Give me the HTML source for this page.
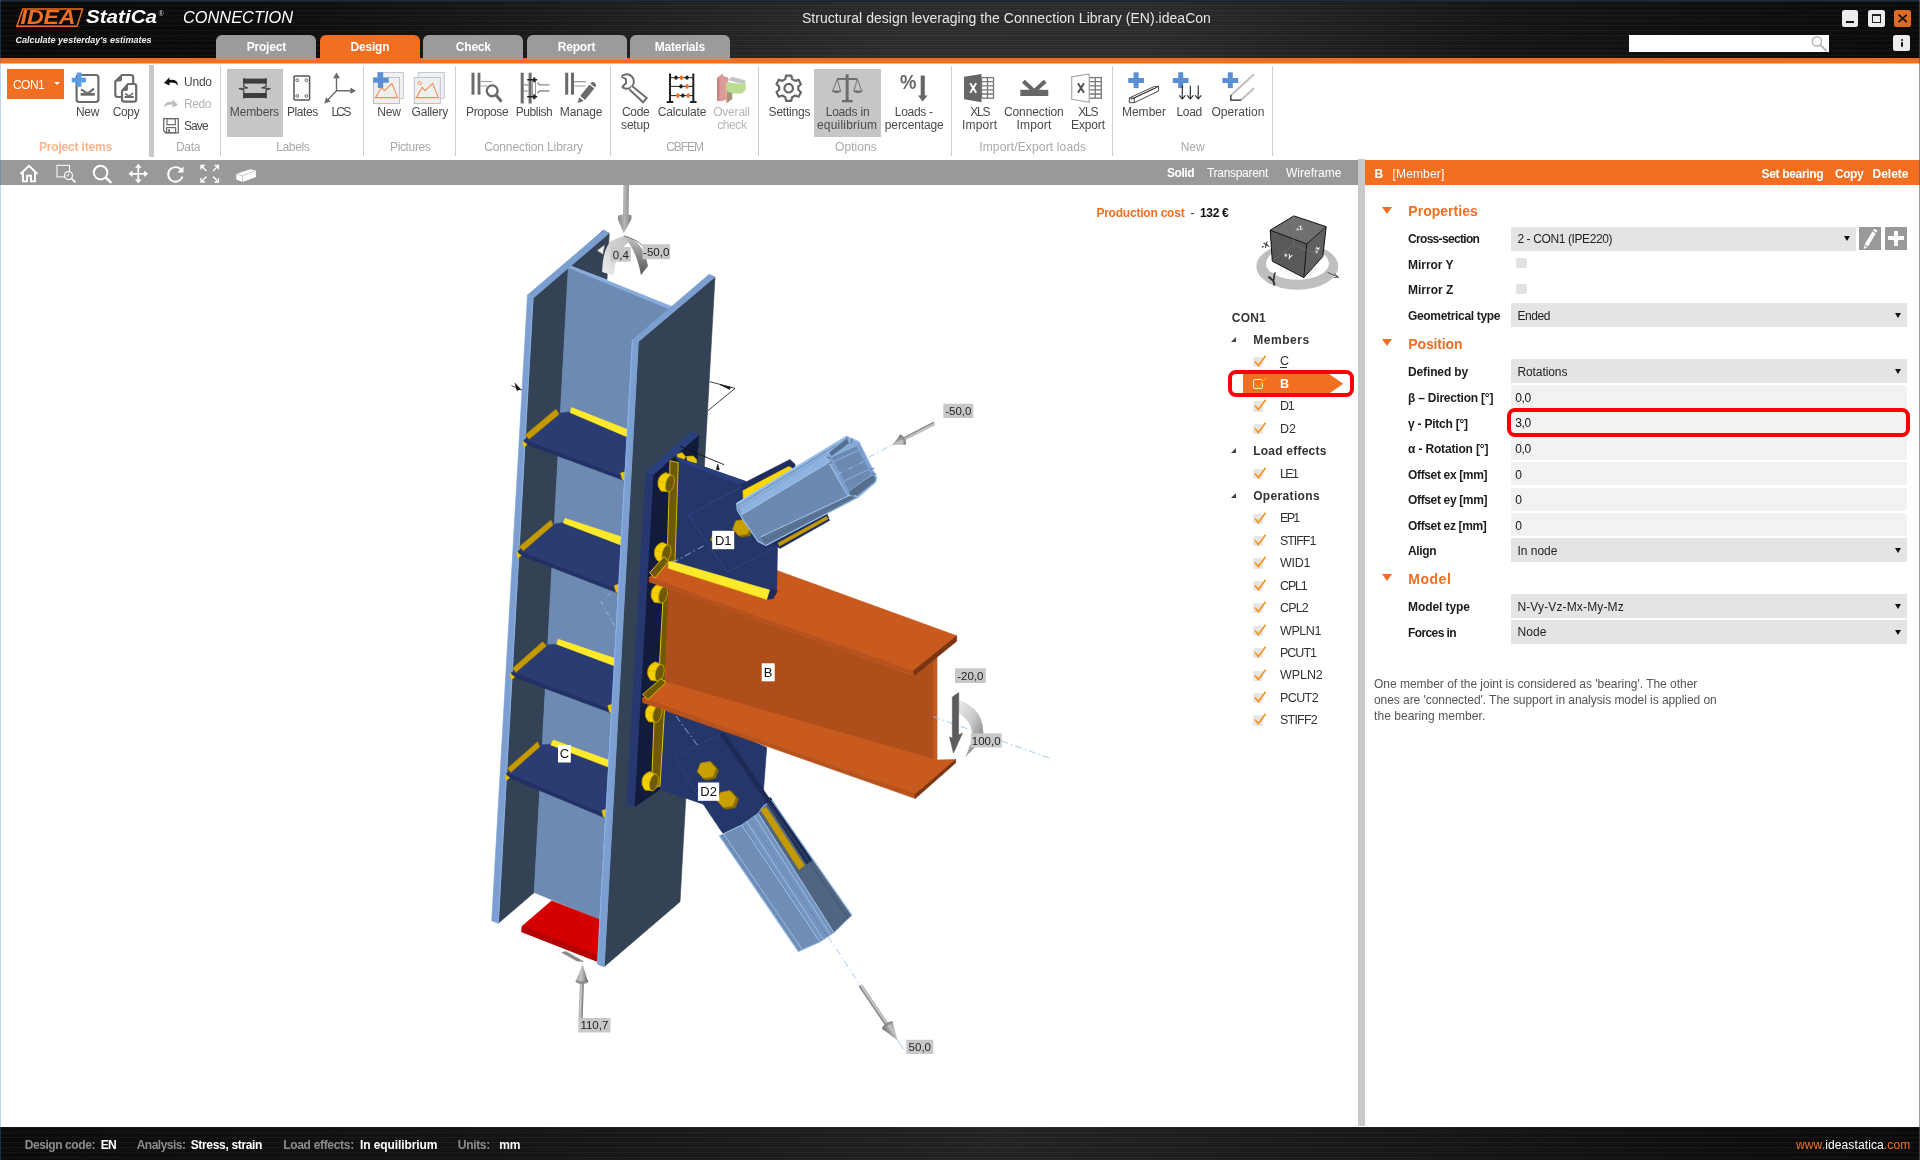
<!DOCTYPE html>
<html lang="en">
<head>
<meta charset="utf-8">
<title>IDEA StatiCa Connection</title>
<style>
*{box-sizing:border-box;margin:0;padding:0}
html,body{width:1920px;height:1160px;overflow:hidden;background:#fff}
body{font-family:"Liberation Sans",sans-serif;font-size:12px;color:#222;position:relative}
.abs{position:absolute}
.t{position:absolute;white-space:nowrap;line-height:1}
#titlebar{left:0;top:0;width:1920px;height:58px;
 background:
  repeating-linear-gradient(180deg,rgba(255,255,255,.035) 0 1px,rgba(0,0,0,.12) 1px 2px,rgba(255,255,255,0) 2px 3px,rgba(0,0,0,.1) 3px 5px),
  linear-gradient(90deg,#0a0a0a 0,#0d0d0d 250px,#202020 600px,#313131 900px,#303030 1150px,#171717 1500px,#0b0b0b 1920px);}
#orangeline{left:0;top:58px;width:1920px;height:6px;background:linear-gradient(180deg,#f26f21 0 5px,#f9b48a 5px 6px)}
.tab{position:absolute;top:34.5px;height:25px;width:100px;border-radius:6px 6px 0 0;background:#9b9b9b;color:#fff;font-weight:bold;font-size:12px;letter-spacing:-0.2px;text-align:center;line-height:25px}
.tab.on{background:#f26f21}
#ribbon{left:0;top:64px;width:1920px;height:95px;background:#fff}
.sep{position:absolute;top:66px;width:1px;height:90px;background:#cfcfcf}
.gl{position:absolute;top:141px;color:#a9a9a9;font-size:12px;line-height:14px;white-space:nowrap;transform:translateX(-50%)}
.bl{position:absolute;color:#4a4a4a;font-size:12px;margin-top:1px;line-height:13px;text-align:center;white-space:nowrap;transform:translateX(-50%)}
.bl.dis{color:#b5b5b5}
.hl{position:absolute;background:#c6c6c6}
#viewbar{left:0;top:159.6px;width:1358px;height:25.2px;background:#999}
#splitter{left:1358px;top:159px;width:7px;height:967px;background:#c9c9c9}
#main{left:0;top:185px;width:1358px;height:941px;background:#fff}
#panelhead{left:1365px;top:160px;width:555px;height:25px;background:#f26f21}
#status{left:0;top:1126.5px;width:1920px;height:33.5px;
 background:
  repeating-linear-gradient(180deg,rgba(255,255,255,.035) 0 1px,rgba(0,0,0,.12) 1px 2px,rgba(255,255,255,0) 2px 3px,rgba(0,0,0,.1) 3px 5px),
  linear-gradient(90deg,#0c0c0c 0,#161616 500px,#262626 1000px,#161616 1500px,#0b0b0b 1920px);}
</style>
</head>
<body>
<div id="app" style="position:absolute;left:0;top:0;width:1920px;height:1160px;will-change:transform">
<div id="titlebar" class="abs"></div>
<div id="orangeline" class="abs"></div>
<div class="tab" style="left:216.3px">Project</div>
<div class="tab on" style="left:319.9px">Design</div>
<div class="tab" style="left:423.3px">Check</div>
<div class="tab" style="left:526.5px">Report</div>
<div class="tab" style="left:629.8px">Materials</div>
<div id="ribbon" class="abs"></div>
<div id="viewbar" class="abs"></div>
<div id="main" class="abs"></div>
<div id="splitter" class="abs"></div>
<div id="panelhead" class="abs"></div>
<div id="status" class="abs"></div>
<!-- ribbon: project items -->
<div class="abs" style="left:6.5px;top:69px;width:57.5px;height:30px;background:#f26f21"></div>
<div class="t" style="left:13px;top:78.5px;font-size:12px;color:#fff;letter-spacing:-0.55px">CON1</div>
<div class="abs" style="left:54px;top:82px;width:0;height:0;border-left:3px solid transparent;border-right:3px solid transparent;border-top:3px solid #fff"></div>
<div class="abs" style="left:149px;top:65px;width:4.8px;height:92px;background:#c8c8c8"></div>
<!-- data -->
<div class="sep" style="left:220px"></div>
<!-- labels -->
<div class="hl" style="left:227px;top:69px;width:56px;height:68px"></div>
<div class="sep" style="left:363px"></div>
<!-- pictures -->
<div class="sep" style="left:455px"></div>
<!-- connection library -->
<div class="sep" style="left:610px"></div>
<!-- cbfem -->
<div class="sep" style="left:758px"></div>
<!-- options -->
<div class="hl" style="left:814px;top:69px;width:67px;height:68px"></div>
<div class="sep" style="left:951px"></div>
<!-- import/export -->
<div class="sep" style="left:1112px"></div>
<!-- new -->
<div class="sep" style="left:1272px"></div>
<svg class="abs" style="left:0;top:0" width="1920" height="190" viewBox="0 0 1920 190" fill="none" stroke-linecap="butt">
<!-- New (project) -->
<rect x="76.6" y="75" width="21.8" height="27" rx="2.5" stroke="#6b6b6b" stroke-width="2.2"/>
<path d="M81 89.3 L87.6 93.6 L94 88.6" stroke="#6b6b6b" stroke-width="2.2"/>
<rect x="80.6" y="93" width="14.2" height="2.7" fill="#6b6b6b"/>
<rect x="71.7" y="77.7" width="14.3" height="4.7" fill="#5d9ce6"/><rect x="76.8" y="72.5" width="4.7" height="14.3" fill="#5d9ce6"/>
<!-- Copy (project) -->
<path d="M121 97 H117.5 Q115.3 97 115.3 94.8 V81.5 L122 75 H131 Q133.2 75 133.2 77.2 V83" stroke="#6b6b6b" stroke-width="2.2"/>
<path d="M115.3 81.5 L122 75 V79.5 Q122 81.5 120 81.5 Z" fill="#6b6b6b"/>
<path d="M122 91 L128 84 H134 Q136.2 84 136.2 86.2 V99.5 Q136.2 101.7 134 101.7 H124.2 Q122 101.7 122 99.5 Z" stroke="#6b6b6b" stroke-width="2.2" fill="#fff"/>
<path d="M122 91 L128 84 V89 Q128 91 126 91 Z" fill="#6b6b6b"/>
<path d="M125.2 93.5 L129.2 96.3 L133.2 93" stroke="#6b6b6b" stroke-width="1.6"/>
<rect x="124.6" y="96" width="9.2" height="2" fill="#6b6b6b"/>
<!-- Undo -->
<path d="M164 83 L169.5 77.3 V80 Q177.5 78.5 178 85.5 Q175 81.8 169.5 82.8 V85.6 Z" fill="#111"/>
<path d="M178 105 L172.5 99.3 V102 Q164.5 100.5 164 107.5 Q167 103.8 172.5 104.8 V107.6 Z" fill="#bdbdbd"/>
<!-- Save -->
<path d="M163.7 118.7 H178.3 V132.8 H165.7 L163.7 130.8 Z" stroke="#6b6b6b" stroke-width="1.3"/>
<rect x="167" y="118.7" width="8.3" height="6" stroke="#6b6b6b" stroke-width="1.2"/>
<rect x="166.6" y="127.6" width="9" height="5.2" stroke="#6b6b6b" stroke-width="1.2"/>
<rect x="168.2" y="129.2" width="1.8" height="3" fill="#6b6b6b"/>
<!-- Members -->
<rect x="243.2" y="78.6" width="23.4" height="5" fill="#3c3c3c"/><rect x="243.2" y="93" width="23.4" height="5" fill="#3c3c3c"/>
<path d="M243.8 78 V86.5 L248 88 L239 88.5 L243.8 90 V98.5 M266 78 V86.5 L261.5 88 L270.5 88.5 L266 90 V98.5" stroke="#3c3c3c" stroke-width="1.2"/>
<!-- Plates -->
<rect x="294" y="76" width="15.6" height="24" rx="1" stroke="#555" stroke-width="1.5"/>
<circle cx="297.3" cy="80.2" r="1.4" stroke="#555" stroke-width="0.9"/><circle cx="306.4" cy="80.2" r="1.4" stroke="#555" stroke-width="0.9"/>
<circle cx="297.3" cy="96" r="1.4" stroke="#555" stroke-width="0.9"/><circle cx="306.4" cy="96" r="1.4" stroke="#555" stroke-width="0.9"/>
<!-- LCS -->
<path d="M336.5 76 V90.8 H352 M336.5 90.8 L327 100.8" stroke="#6b6b6b" stroke-width="1.4"/>
<path d="M336.5 72.6 L333 78.3 H340 Z M356 90.8 L350.4 87.5 V94.1 Z M324.3 103.6 L326 97.3 L330.6 101.6 Z" fill="#6b6b6b"/>
<!-- Pictures New -->
<g id="pic"><rect x="377.5" y="72.5" width="26" height="26" fill="#f1f1f1" stroke="#c3c8da" stroke-width="1"/>
<rect x="373.5" y="77.5" width="26" height="26" fill="#efefef" stroke="#b9c0d6" stroke-width="1"/>
<path d="M375.5 97.6 L381.5 87.3 L384.4 90.6 L391.9 83.5 L397.6 97.6 Z" stroke="#f0905a" stroke-width="1.1"/></g>
<rect x="373.2" y="77.7" width="15.6" height="5" fill="#5b8fd3"/><rect x="377.8" y="72.3" width="5.4" height="15.6" fill="#5b8fd3"/>
<g transform="translate(40.8 0)"><g><rect x="377.5" y="72.5" width="26" height="26" fill="#f1f1f1" stroke="#c3c8da" stroke-width="1"/>
<rect x="373.5" y="77.5" width="26" height="26" fill="#efefef" stroke="#b9c0d6" stroke-width="1"/>
<path d="M375.5 97.6 L381.5 87.3 L384.4 90.6 L391.9 83.5 L397.6 97.6 Z" stroke="#f0905a" stroke-width="1.1"/></g></g>
<circle cx="419.7" cy="83.1" r="1.7" stroke="#f0905a" stroke-width="0.9"/>
<!-- Propose -->
<rect x="471.5" y="72.7" width="3" height="22" fill="#6b6b6b"/><rect x="477.6" y="72.7" width="2.8" height="22" fill="#6b6b6b"/>
<path d="M480.4 81.5 H492 M480.4 86 H487" stroke="#9a9a9a" stroke-width="1.2"/>
<circle cx="492.2" cy="90.8" r="5.4" stroke="#6b6b6b" stroke-width="2.4" fill="#fff"/>
<path d="M496.3 95.3 L501.5 101.7" stroke="#6b6b6b" stroke-width="3"/>
<!-- Publish -->
<rect x="520.7" y="72.7" width="3" height="30.8" fill="#6b6b6b"/><rect x="528.6" y="72.7" width="3" height="30.8" fill="#6b6b6b"/>
<rect x="532.6" y="79.5" width="3" height="17.5" stroke="#8a8a8a" stroke-width="0.9"/>
<path d="M527.2 79.8 H537.2 M527.2 96.8 H537.2" stroke="#222" stroke-width="1.6"/>
<path d="M534.3 77.4 V82.2 M534.3 94.4 V99.2" stroke="#222" stroke-width="2.2"/>
<path d="M523.7 84.8 H528.6 M523.7 91 H528.6" stroke="#8a8a8a" stroke-width="1.2"/>
<path d="M537.5 82.5 L539.5 84.8 H549.4 M537.5 93.3 L539.5 91 H549.4" stroke="#8a8a8a" stroke-width="1.3"/>
<!-- Manage -->
<rect x="565.2" y="72.7" width="3" height="22" fill="#6b6b6b"/><rect x="571" y="72.7" width="3" height="22" fill="#6b6b6b"/>
<path d="M574 81.7 H585.7 M574 86 H585.7" stroke="#9a9a9a" stroke-width="1.2"/>
<path d="M580.2 96 L589.5 84.5 L594.3 88.4 L585 99.9 Z" fill="#6b6b6b"/>
<path d="M590.4 83.4 L591.2 82.6 Q593.3 81.2 595 82.9 Q596.8 84.8 595.6 86.5 L595 87.4 Z" fill="#6b6b6b"/>
<path d="M579.2 97.3 L583.7 101 L577.7 103 Z" fill="#6b6b6b"/>
<!-- Code setup wrench -->
<path d="M621.5 76.5 A7.2 7.2 0 1 1 622 87 M621.5 76.5 L626 79.3 V83.3 L622 87" stroke="#6b6b6b" stroke-width="1.9"/>
<path d="M632 86 L646.8 98 L643 102.3 L629.5 89.5" stroke="#6b6b6b" stroke-width="1.9" fill="#fff"/>
<!-- Calculate abacus -->
<path d="M670 73.5 V101.5 M693.3 73.5 V101.5" stroke="#222" stroke-width="2"/>
<path d="M666.8 102 H673.2 M690.1 102 H696.5" stroke="#222" stroke-width="2.2"/>
<path d="M670 77.7 H693.3 M670 86.4 H693.3 M670 95.6 H693.3" stroke="#222" stroke-width="1"/>
<g fill="#222"><ellipse cx="676" cy="77.7" rx="1.7" ry="2.1"/><ellipse cx="687" cy="77.7" rx="1.7" ry="2.1"/><ellipse cx="681" cy="86.4" rx="1.7" ry="2.1"/><ellipse cx="682.8" cy="95.6" rx="1.7" ry="2.1"/></g>
<g fill="#ee7423"><ellipse cx="681.5" cy="77.7" rx="1.7" ry="2.3"/><ellipse cx="687" cy="86.4" rx="1.7" ry="2.3"/><ellipse cx="677.8" cy="95.6" rx="1.7" ry="2.3"/><ellipse cx="688.2" cy="95.6" rx="1.7" ry="2.3"/></g>
<!-- Overall check (disabled) -->
<path d="M717 77.5 L723 73.5 V76 L728 77.5 V99.5 L722 101 H717 Z" fill="#dc9a9a"/>
<path d="M717 77.5 L719.5 78.5 V100.5 L717 101 Z" fill="#c98585"/>
<path d="M726.3 90 L732.3 91 V99 L726.3 103.5 Z" fill="#a9917b"/>
<path d="M726.3 82 L742 84 L745.7 80.8 V90 L742 93.6 H732 L726.3 91 Z" fill="#b9dc92"/>
<path d="M727.3 80 L732.2 76.8 L745.7 80.4 L742.2 84 Z" fill="#c4c4c4"/>
<path d="M726.3 82 V103.3" stroke="#f3c089" stroke-width="0.8"/>
<!-- Settings gear -->
<g transform="translate(788.7 88.2)" stroke="#666" stroke-width="2.2" stroke-linejoin="round">
<path id="gear" d="M-2.6 -12.6 H2.6 L3.4 -9.1 L6.5 -7.3 L9.9 -8.5 L12.2 -4 L9.6 -1.6 V1.6 L12.2 4 L9.9 8.5 L6.5 7.3 L3.4 9.1 L2.6 12.6 H-2.6 L-3.4 9.1 L-6.5 7.3 L-9.9 8.5 L-12.2 4 L-9.6 1.6 V-1.6 L-12.2 -4 L-9.9 -8.5 L-6.5 -7.3 L-3.4 -9.1 Z"/>
<circle r="4.3"/></g>
<!-- Loads in equilibrium -->
<rect x="845.7" y="74.3" width="2.9" height="26.5" fill="#6b6b6b"/><rect x="842" y="100" width="10.7" height="2.3" fill="#6b6b6b"/><rect x="837.3" y="78" width="20" height="1.9" fill="#6b6b6b"/>
<path d="M837.3 79 L832.8 91 M837.3 79 L840.5 91 M857.3 79 L854 91 M857.3 79 L861.8 91" stroke="#6b6b6b" stroke-width="0.9"/>
<path d="M832.2 91 H841 Q836.6 94.5 832.2 91 Z M853.5 91 H862.4 Q858 94.5 853.5 91 Z" fill="#6b6b6b" stroke="#6b6b6b" stroke-width="0.8"/>
<!-- Loads percentage -->
<rect x="920.7" y="75.6" width="4.1" height="21" fill="#666"/><path d="M918 95.5 H927.5 L922.7 101.4 Z" fill="#666"/>
<!-- XLS Import -->
<path d="M964 76.8 L981.5 74 V102.3 L964 99.3 Z" fill="#666"/>
<path d="M970.2 83.3 L976.2 92.8 M976.2 83.3 L970.2 92.8" stroke="#fff" stroke-width="2"/>
<g id="grid" stroke="#777" stroke-width="1.3"><rect x="981.5" y="77.6" width="12" height="20.6"/><path d="M987.5 77.6 V98.2 M981.5 81.7 H993.5 M981.5 85.8 H993.5 M981.5 89.9 H993.5 M981.5 94 H993.5"/></g>
<!-- Connection import -->
<rect x="1020.3" y="89.8" width="28" height="6.2" fill="#666"/>
<path d="M1023.4 81.3 L1034.2 91.3 L1045.2 81.3" stroke="#666" stroke-width="4"/>
<!-- XLS Export -->
<g transform="translate(107.8 0)"><g stroke="#777" stroke-width="1.3"><rect x="981.5" y="77.6" width="12" height="20.6"/><path d="M987.5 77.6 V98.2 M981.5 81.7 H993.5 M981.5 85.8 H993.5 M981.5 89.9 H993.5 M981.5 94 H993.5"/></g></g>
<path d="M1071.7 76.8 L1089.2 74 V102.3 L1071.7 99.3 Z" fill="#fff" stroke="#aaa" stroke-width="1.2"/>
<path d="M1078 83.3 L1084 92.8 M1084 83.3 L1078 92.8" stroke="#555" stroke-width="2"/>
<!-- Member -->
<g id="plus"><rect x="1128.2" y="78" width="15.8" height="5" fill="#5b8fd3"/><rect x="1133.6" y="72.3" width="5" height="15.8" fill="#5b8fd3"/></g>
<path d="M1129.3 98 H1134.3 V102.7 H1129.3 Z M1129.3 98 L1154.5 86.4 H1158.6 L1134.3 98 M1158.6 86.4 V91 L1134.3 102.7 M1131 99.3 L1156 87.7" stroke="#333" stroke-width="0.9"/>
<!-- Load -->
<g transform="translate(44.6 0)"><g><rect x="1128.2" y="78" width="15.8" height="5" fill="#5b8fd3"/><rect x="1133.6" y="72.3" width="5" height="15.8" fill="#5b8fd3"/></g></g>
<path d="M1182.3 85.6 V98.5 M1190.3 85.6 V98.5 M1198.2 85.6 V98.5" stroke="#222" stroke-width="1.1"/>
<path d="M1179.3 95.3 L1182.3 99 L1185.3 95.3 M1187.3 95.3 L1190.3 99 L1193.3 95.3 M1195.2 95.3 L1198.2 99 L1201.2 95.3" stroke="#222" stroke-width="1.1"/>
<!-- Operation -->
<g transform="translate(94.2 0)"><g><rect x="1128.2" y="78" width="15.8" height="5" fill="#5b8fd3"/><rect x="1133.6" y="72.3" width="5" height="15.8" fill="#5b8fd3"/></g></g>
<path d="M1231 95.2 L1254 74.3 M1241 100 L1254 88.2" stroke="#c0c0c0" stroke-width="2"/>
<path d="M1230.8 95 V100.2 H1241.2" stroke="#222" stroke-width="1.3"/>
</svg>
<div class="t" style="left:900px;top:72px;font-size:20px;font-weight:bold;color:#666;transform:scaleX(.92);transform-origin:0 0">%</div>

<!--RIBBONICONS_END-->
<!--RLABELS_START-->
<div class="t" style="left:76.0px;top:106.4px;font-size:12px;color:#4a4a4a;letter-spacing:-0.31px">New</div>
<div class="t" style="left:112.7px;top:106.4px;font-size:12px;color:#4a4a4a;letter-spacing:-0.35px">Copy</div>
<div class="t" style="left:184.0px;top:75.6px;font-size:12px;color:#4a4a4a;letter-spacing:-0.22px">Undo</div>
<div class="t" style="left:183.9px;top:97.9px;font-size:12px;color:#b5b5b5;letter-spacing:-0.40px">Redo</div>
<div class="t" style="left:183.9px;top:120.2px;font-size:12px;color:#4a4a4a;letter-spacing:-0.89px">Save</div>
<div class="t" style="left:229.8px;top:106.4px;font-size:12px;color:#4a4a4a;letter-spacing:-0.12px">Members</div>
<div class="t" style="left:286.9px;top:106.4px;font-size:12px;color:#4a4a4a;letter-spacing:-0.42px">Plates</div>
<div class="t" style="left:331.5px;top:106.4px;font-size:12px;color:#4a4a4a;letter-spacing:-1.81px">LCS</div>
<div class="t" style="left:377.3px;top:106.4px;font-size:12px;color:#4a4a4a;letter-spacing:-0.21px">New</div>
<div class="t" style="left:411.5px;top:106.4px;font-size:12px;color:#4a4a4a;letter-spacing:-0.19px">Gallery</div>
<div class="t" style="left:466.1px;top:106.4px;font-size:12px;color:#4a4a4a;letter-spacing:-0.37px">Propose</div>
<div class="t" style="left:515.7px;top:106.4px;font-size:12px;color:#4a4a4a;letter-spacing:-0.39px">Publish</div>
<div class="t" style="left:559.8px;top:106.4px;font-size:12px;color:#4a4a4a;letter-spacing:-0.15px">Manage</div>
<div class="t" style="left:621.9px;top:106.4px;font-size:12px;color:#4a4a4a;letter-spacing:-0.30px">Code</div>
<div class="t" style="left:621.1px;top:119.4px;font-size:12px;color:#4a4a4a;letter-spacing:-0.21px">setup</div>
<div class="t" style="left:657.8px;top:106.4px;font-size:12px;color:#4a4a4a;letter-spacing:-0.19px">Calculate</div>
<div class="t" style="left:713.2px;top:106.4px;font-size:12px;color:#b5b5b5;letter-spacing:-0.20px">Overall</div>
<div class="t" style="left:717.3px;top:119.4px;font-size:12px;color:#b5b5b5;letter-spacing:-0.43px">check</div>
<div class="t" style="left:768.6px;top:106.4px;font-size:12px;color:#4a4a4a;letter-spacing:-0.21px">Settings</div>
<div class="t" style="left:825.7px;top:106.4px;font-size:12px;color:#4a4a4a;letter-spacing:-0.21px">Loads in</div>
<div class="t" style="left:816.9px;top:119.4px;font-size:12px;color:#4a4a4a;letter-spacing:0.22px">equilibrium</div>
<div class="t" style="left:894.8px;top:106.4px;font-size:12px;color:#4a4a4a;letter-spacing:-0.30px">Loads -</div>
<div class="t" style="left:884.8px;top:119.4px;font-size:12px;color:#4a4a4a;letter-spacing:-0.12px">percentage</div>
<div class="t" style="left:970.2px;top:106.4px;font-size:12px;color:#4a4a4a;letter-spacing:-1.18px">XLS</div>
<div class="t" style="left:961.9px;top:119.4px;font-size:12px;color:#4a4a4a;letter-spacing:0.23px">Import</div>
<div class="t" style="left:1004.0px;top:106.4px;font-size:12px;color:#4a4a4a;letter-spacing:-0.11px">Connection</div>
<div class="t" style="left:1016.5px;top:119.4px;font-size:12px;color:#4a4a4a;letter-spacing:0.16px">Import</div>
<div class="t" style="left:1078.2px;top:106.4px;font-size:12px;color:#4a4a4a;letter-spacing:-1.20px">XLS</div>
<div class="t" style="left:1071.1px;top:119.4px;font-size:12px;color:#4a4a4a;letter-spacing:-0.16px">Export</div>
<div class="t" style="left:1121.9px;top:106.4px;font-size:12px;color:#4a4a4a;letter-spacing:0.03px">Member</div>
<div class="t" style="left:1176.5px;top:106.4px;font-size:12px;color:#4a4a4a;letter-spacing:-0.33px">Load</div>
<div class="t" style="left:1211.5px;top:106.4px;font-size:12px;color:#4a4a4a;letter-spacing:0.02px">Operation</div>
<div class="t" style="left:39.0px;top:141.0px;font-size:12px;color:#f7b58e;font-weight:bold;letter-spacing:-0.19px">Project items</div>
<div class="t" style="left:176.0px;top:141.0px;font-size:12px;color:#a9a9a9;letter-spacing:-0.34px">Data</div>
<div class="t" style="left:276.2px;top:141.0px;font-size:12px;color:#a9a9a9;letter-spacing:-0.35px">Labels</div>
<div class="t" style="left:390.0px;top:141.0px;font-size:12px;color:#a9a9a9;letter-spacing:-0.36px">Pictures</div>
<div class="t" style="left:484.2px;top:141.0px;font-size:12px;color:#a9a9a9;letter-spacing:-0.11px">Connection Library</div>
<div class="t" style="left:666.2px;top:141.0px;font-size:12px;color:#a9a9a9;letter-spacing:-1.05px">CBFEM</div>
<div class="t" style="left:835.0px;top:141.0px;font-size:12px;color:#a9a9a9;letter-spacing:0.06px">Options</div>
<div class="t" style="left:979.2px;top:141.0px;font-size:12px;color:#a9a9a9;letter-spacing:0.16px">Import/Export loads</div>
<div class="t" style="left:1180.8px;top:141.0px;font-size:12px;color:#a9a9a9;letter-spacing:-0.09px">New</div>
<!--RLABELS_END-->

<!-- title bar content -->
<div class="abs" style="left:0;top:0;width:1920px;height:2px;background:linear-gradient(180deg,#22303f,#161c22)"></div>
<div class="abs" style="left:0;top:0;width:1px;height:1160px;background:rgba(70,120,180,.32)"></div>
<div class="abs" style="left:1919px;top:0;width:1px;height:1160px;background:rgba(90,95,105,.6)"></div>
<svg class="abs" style="left:0;top:0" width="330" height="58" viewBox="0 0 330 58">
<path d="M22.8 9 H82.6 L77 26.2 H16.8 Z" fill="none" stroke="#f26f21" stroke-width="1.4"/>
<text x="20.5" y="24.3" font-family="Liberation Sans, sans-serif" font-size="19.5" font-weight="bold" font-style="italic" fill="#f26f21" textLength="55" lengthAdjust="spacingAndGlyphs">IDEA</text>
<text x="86" y="23.3" font-family="Liberation Sans, sans-serif" font-size="17.5" font-weight="bold" font-style="italic" fill="#fff" textLength="71" lengthAdjust="spacingAndGlyphs">StatiCa</text>
<text x="158.5" y="15.5" font-family="Liberation Sans, sans-serif" font-size="7" fill="#ddd">®</text>
<text x="183" y="23" font-family="Liberation Sans, sans-serif" font-size="15.8" font-style="italic" fill="#fff" textLength="110" lengthAdjust="spacingAndGlyphs">CONNECTION</text>
<text x="15.5" y="43" font-family="Liberation Sans, sans-serif" font-size="9" font-weight="bold" font-style="italic" fill="#f0f0f0" textLength="136" lengthAdjust="spacingAndGlyphs">Calculate yesterday's estimates</text>
</svg>
<div class="t" style="left:802px;top:11px;font-size:14px;color:#e6e6e6;letter-spacing:0.03px">Structural design leveraging the Connection Library (EN).ideaCon</div>
<div class="abs" style="left:1841.5px;top:10px;width:16.5px;height:17px;border-radius:2.5px;background:#ececec"></div>
<div class="abs" style="left:1846px;top:21.3px;width:8px;height:1.6px;background:#111"></div>
<div class="abs" style="left:1868px;top:10px;width:16.7px;height:17px;border-radius:2.5px;background:#ececec"></div>
<div class="abs" style="left:1872px;top:14px;width:8.7px;height:8.6px;border:1px solid #222;border-top-width:2px"></div>
<div class="abs" style="left:1894.3px;top:10px;width:16.8px;height:17px;border-radius:2.5px;background:#e06c22"></div>
<svg class="abs" style="left:1894px;top:10px" width="17" height="17" viewBox="1894 10 17 17"><path d="M1898.6 14.6 L1906.8 22.2 M1906.8 14.6 L1898.6 22.2" stroke="#111" stroke-width="1.7"/></svg>
<div class="abs" style="left:1628.5px;top:34.7px;width:200.3px;height:17.2px;background:#fff"></div>
<svg class="abs" style="left:1805px;top:34px" width="25" height="19" viewBox="1805 34 25 19"><circle cx="1816.9" cy="41.4" r="4.6" fill="none" stroke="#b4b4b4" stroke-width="1.5"/><path d="M1820.3 44.8 L1826.6 51" stroke="#b4b4b4" stroke-width="1.8"/></svg>
<div class="abs" style="left:1893.4px;top:34.7px;width:16.7px;height:16.6px;border-radius:2.5px;background:#ececec"></div>
<div class="abs" style="left:1900.7px;top:38.6px;width:2.2px;height:2.2px;border-radius:50%;background:#111"></div>
<div class="abs" style="left:1900.7px;top:42px;width:2.2px;height:5.2px;border-radius:1px;background:#111"></div>
<!-- view bar -->
<svg class="abs" style="left:0;top:159px" width="300" height="27" viewBox="0 159 300 27" fill="none" stroke="#fff" stroke-width="2" stroke-linejoin="miter">
<path d="M20.5 174 L29 165.8 L37.5 174 M23 172.5 V181.4 H27 V175.8 H31 V181.4 H35 V172.5" stroke-width="1.9"/>
<rect x="57" y="165.3" width="12.6" height="11.6" stroke-width="1"/>
<circle cx="68.5" cy="175.6" r="4" fill="#999" stroke-width="1.2"/><path d="M68.5 173.5 V175.8 H66.5" stroke-width=".8"/><path d="M71.5 178.6 L75.5 182.4" stroke-width="1.6"/>
<circle cx="100.6" cy="172.6" r="6.8" stroke-width="2"/><path d="M105.5 177.4 L111.4 182.8" stroke-width="2.4"/>
<path d="M138.3 166.5 V181 M131 173.8 H145.6" stroke-width="1.7"/>
<path d="M138.3 163.8 L135 167.8 H141.6 Z M138.3 183.6 L135 179.6 H141.6 Z M128.4 173.8 L132.4 170.5 V177.1 Z M148.2 173.8 L144.2 170.5 V177.1 Z" fill="#fff" stroke="none"/>
<path d="M181.5 170.2 A7.3 7.3 0 1 0 182.5 176.5" stroke-width="1.9"/><path d="M183.5 166.5 V172.5 H177.5 Z" fill="#fff" stroke="none"/>
<g stroke-width="1.3"><path d="M201 165.5 L206.5 171 M201 169.5 V165.5 H205 M218.5 165.5 L213 171 M214.5 165.5 H218.5 V169.5 M201 182 L206.5 176.5 M201 178 V182 H205 M218.5 182 L213 176.5 M218.5 178 V182 H214.5"/></g>
<path d="M236.3 174 L250 169.3 L256 170.5 V177 L242.5 182 L236.3 179.5 Z" fill="#fff" stroke="none"/>
<path d="M242.5 175.7 V182 M236.3 174 L242.5 175.7 L256 170.5" stroke="#bbb" stroke-width=".8"/>
</svg>
<div class="t" style="left:1167px;top:167px;font-size:12px;font-weight:bold;color:#fff;letter-spacing:-0.45px">Solid</div>
<div class="t" style="left:1207px;top:167px;font-size:12px;color:#fff;letter-spacing:-0.3px">Transparent</div>
<div class="t" style="left:1286px;top:167px;font-size:12px;color:#fff">Wireframe</div>
<!-- panel header -->
<div class="t" style="left:1374.5px;top:168px;font-size:12px;font-weight:bold;color:#fff">B</div>
<div class="t" style="left:1392.5px;top:168px;font-size:12px;color:#fff;letter-spacing:0.15px">[Member]</div>
<div class="t" style="left:1761.5px;top:168px;font-size:12px;font-weight:bold;color:#fff;letter-spacing:-0.32px">Set bearing</div>
<div class="t" style="left:1835px;top:168px;font-size:12px;font-weight:bold;color:#fff;letter-spacing:-0.45px">Copy</div>
<div class="t" style="left:1872.5px;top:168px;font-size:12px;font-weight:bold;color:#fff">Delete</div>

<!--MODEL_START--><svg class="abs" style="left:0;top:185px" width="1358" height="941" viewBox="0 185 1358 941">
<defs><linearGradient id="gArrow" x1="0" x2="1"><stop offset="0" stop-color="#8a8a8a"/><stop offset=".5" stop-color="#b5b5b5"/><stop offset="1" stop-color="#7d7d7d"/></linearGradient><linearGradient id="gArc" x1="0" x2="1" y1="0" y2="1"><stop offset="0" stop-color="#f4f4f4"/><stop offset=".5" stop-color="#c8c8c8"/><stop offset="1" stop-color="#6a6a6a"/></linearGradient><linearGradient id="gArc2" x1="0" x2="0" y1="0" y2="1"><stop offset="0" stop-color="#e8e8e8"/><stop offset=".6" stop-color="#8a8a8a"/><stop offset="1" stop-color="#5a5a5a"/></linearGradient><linearGradient id="gArcL" x1="0" x2="1" y1="1" y2="0"><stop offset="0" stop-color="#f0f0f0"/><stop offset=".5" stop-color="#d4d4d4"/><stop offset="1" stop-color="#c2c2c2"/></linearGradient><linearGradient id="gArcR" x1="0" x2="0" y1="0" y2="1"><stop offset="0" stop-color="#c6c6c6"/><stop offset=".5" stop-color="#8a8a8a"/><stop offset="1" stop-color="#565656"/></linearGradient><linearGradient id="gShaft" x1="0" x2="0" y1="0" y2="1"><stop offset="0" stop-color="#a2a2a2"/><stop offset=".35" stop-color="#cfcfcf"/><stop offset="1" stop-color="#6e6e6e"/></linearGradient><linearGradient id="gHead" x1="0" x2="0" y1="0" y2="1"><stop offset="0" stop-color="#969696"/><stop offset=".4" stop-color="#c6c6c6"/><stop offset="1" stop-color="#666"/></linearGradient></defs>
<polygon points="623.4,185.0 629.0,185.0 628.6,214.5 631.6,215.5 631.3,219.5 623.8,233.3 617.8,219.5 618.0,215.5 623.0,214.5" fill="url(#gArrow)"/>
<polygon points="609.2,233.3 607.0,279.5 566.5,264.3 603.3,230.3" fill="#344256" stroke="#344256" stroke-width="0.6" stroke-linejoin="round"/>
<polygon points="533.0,298.3 568.3,267.5 534.2,892.5 498.3,923.3" fill="#344256" stroke="#344256" stroke-width="0.6" stroke-linejoin="round"/>
<polygon points="568.3,267.5 671.0,307.8 632.5,340.0 599.5,919.5 534.2,892.5" fill="#6c8ab2" stroke="#6c8ab2" stroke-width="0.6" stroke-linejoin="round"/>
<polygon points="566.7,264.2 674.2,307.5 671.0,309.8 566.0,266.6" fill="#86abdc" stroke="#86abdc" stroke-width="0.6" stroke-linejoin="round"/>
<polygon points="527.5,295.0 603.3,230.3 609.2,233.3 533.0,298.3" fill="#7c9fd1" stroke="#7c9fd1" stroke-width="0.6" stroke-linejoin="round"/>
<polygon points="527.5,295.0 533.0,298.3 498.3,923.3 491.7,920.8" fill="#7c9fd1" stroke="#7c9fd1" stroke-width="0.6" stroke-linejoin="round"/>
<polyline points="533.0,298.3 498.3,923.3" fill="none" stroke="#8fb6ea" stroke-width="0.8"/>
<polygon points="638.3,341.7 715.0,277.0 680.0,901.7 604.2,966.7" fill="#344256" stroke="#344256" stroke-width="0.6" stroke-linejoin="round"/>
<polygon points="632.5,340.0 709.2,274.2 715.0,276.9 638.3,341.7" fill="#7c9fd1" stroke="#7c9fd1" stroke-width="0.6" stroke-linejoin="round"/>
<polygon points="632.5,340.0 638.3,341.7 604.2,966.7 597.5,964.0" fill="#7c9fd1" stroke="#7c9fd1" stroke-width="0.6" stroke-linejoin="round"/>
<polyline points="632.5,340.0 597.5,964.0" fill="none" stroke="#8fb6ea" stroke-width="0.8"/>
<polygon points="551.7,900.8 599.2,919.4 597.7,961.5 521.7,931.7 522.3,926.0" fill="#d40000" stroke="#d40000" stroke-width="0.6" stroke-linejoin="round"/>
<polygon points="522.3,926.0 597.8,955.8 597.7,961.5 521.7,931.7" fill="#b40000" stroke="#b40000" stroke-width="0.6" stroke-linejoin="round"/>
<polygon points="524.2,440.0 559.2,413.3 570.0,411.7 626.7,436.7 624.6,477.0" fill="#2a3c72" stroke="#2a3c72" stroke-width="0.6" stroke-linejoin="round"/>
<polygon points="524.2,440.0 624.6,477.0 624.4,480.6 524.0,443.4" fill="#223063" stroke="#223063" stroke-width="0.6" stroke-linejoin="round"/>
<polygon points="571.7,407.5 626.9,429.2 626.7,436.7 570.0,412.5" fill="#ffe92b" stroke="#ffe92b" stroke-width="0.6" stroke-linejoin="round"/>
<polygon points="525.0,435.0 555.8,409.2 559.2,414.2 529.2,439.2" fill="#c49a00" stroke="#a07d00" stroke-width="0.6" stroke-linejoin="round"/>
<polygon points="522.7,441.0 527.2,444.5 523.7,447.0" fill="#e6c400" stroke="#e6c400" stroke-width="0.6" stroke-linejoin="round"/>
<polygon points="620.6,473.0 626.1,471.5 625.4,481.5 622.1,479.0" fill="#e6c400" stroke="#e6c400" stroke-width="0.6" stroke-linejoin="round"/>
<polygon points="518.3,551.0 553.3,524.2 563.3,522.5 620.8,545.0 618.4,589.5" fill="#2a3c72" stroke="#2a3c72" stroke-width="0.6" stroke-linejoin="round"/>
<polygon points="518.3,551.0 618.4,589.5 618.2,593.1 518.1,554.4" fill="#223063" stroke="#223063" stroke-width="0.6" stroke-linejoin="round"/>
<polygon points="565.0,518.3 621.0,536.7 620.8,545.0 563.3,523.0" fill="#ffe92b" stroke="#ffe92b" stroke-width="0.6" stroke-linejoin="round"/>
<polygon points="519.2,546.7 550.8,520.0 553.3,525.0 523.3,550.8" fill="#c49a00" stroke="#a07d00" stroke-width="0.6" stroke-linejoin="round"/>
<polygon points="516.8,552.0 521.3,555.5 517.8,558.0" fill="#e6c400" stroke="#e6c400" stroke-width="0.6" stroke-linejoin="round"/>
<polygon points="614.4,585.5 619.9,584.0 619.2,594.0 615.9,591.5" fill="#e6c400" stroke="#e6c400" stroke-width="0.6" stroke-linejoin="round"/>
<polygon points="511.7,672.5 546.7,645.0 556.7,644.2 614.2,665.8 611.8,709.5" fill="#2a3c72" stroke="#2a3c72" stroke-width="0.6" stroke-linejoin="round"/>
<polygon points="511.7,672.5 611.8,709.5 611.6,713.1 511.5,675.9" fill="#223063" stroke="#223063" stroke-width="0.6" stroke-linejoin="round"/>
<polygon points="558.3,639.2 614.5,658.3 614.2,665.8 556.7,644.2" fill="#ffe92b" stroke="#ffe92b" stroke-width="0.6" stroke-linejoin="round"/>
<polygon points="512.5,668.3 542.5,641.7 546.7,645.8 515.8,672.5" fill="#c49a00" stroke="#a07d00" stroke-width="0.6" stroke-linejoin="round"/>
<polygon points="510.2,673.5 514.7,677.0 511.2,679.5" fill="#e6c400" stroke="#e6c400" stroke-width="0.6" stroke-linejoin="round"/>
<polygon points="607.8,705.5 613.3,704.0 612.6,714.0 609.3,711.5" fill="#e6c400" stroke="#e6c400" stroke-width="0.6" stroke-linejoin="round"/>
<polygon points="506.7,773.3 540.8,745.0 550.8,744.2 608.3,765.0 605.9,814.5" fill="#2a3c72" stroke="#2a3c72" stroke-width="0.6" stroke-linejoin="round"/>
<polygon points="506.7,773.3 605.9,814.5 605.7,818.1 506.5,776.7" fill="#223063" stroke="#223063" stroke-width="0.6" stroke-linejoin="round"/>
<polygon points="553.3,740.0 608.6,760.0 608.3,767.0 550.8,745.0" fill="#ffe92b" stroke="#ffe92b" stroke-width="0.6" stroke-linejoin="round"/>
<polygon points="507.5,768.3 537.5,741.7 540.0,746.7 510.8,772.5" fill="#c49a00" stroke="#a07d00" stroke-width="0.6" stroke-linejoin="round"/>
<polygon points="505.2,774.3 509.7,777.8 506.2,780.3" fill="#e6c400" stroke="#e6c400" stroke-width="0.6" stroke-linejoin="round"/>
<polygon points="601.9,810.5 607.4,809.0 606.7,819.0 603.4,816.5" fill="#e6c400" stroke="#e6c400" stroke-width="0.6" stroke-linejoin="round"/>
<polygon points="632.5,340.0 638.3,341.7 604.2,966.7 597.5,964.0" fill="#7c9fd1" stroke="#7c9fd1" stroke-width="0.6" stroke-linejoin="round"/>
<polyline points="632.5,340.0 597.5,964.0" fill="none" stroke="#8fb6ea" stroke-width="0.8"/>
<polyline points="611.0,593.0 601.0,602.0 616.0,628.0" fill="none" stroke="#9cc4f0" stroke-width="0.8" stroke-dasharray="5 3 1 3"/>
<polygon points="645.9,472.3 653.8,474.8 635.0,806.7 626.7,803.3" fill="#26386f" stroke="#26386f" stroke-width="0.6" stroke-linejoin="round"/>
<polygon points="645.9,472.3 691.5,432.1 699.0,435.5 653.8,474.8" fill="#2a3f7e" stroke="#2a3f7e" stroke-width="0.6" stroke-linejoin="round"/>
<polygon points="653.8,474.8 699.0,435.5 697.0,461.0 676.0,470.0 672.0,560.0 662.0,700.0 660.0,789.2 635.0,806.7" fill="#121b3b" stroke="#121b3b" stroke-width="0.6" stroke-linejoin="round"/>
<polygon points="677.0,454.5 682.0,452.5 685.5,456.5 684.0,460.0 677.5,459.0" fill="#e6c400" stroke="#e6c400" stroke-width="0.6" stroke-linejoin="round"/>
<polygon points="686.5,456.5 693.0,456.0 696.5,459.5 696.5,463.0 687.5,462.0" fill="#e6c400" stroke="#e6c400" stroke-width="0.6" stroke-linejoin="round"/>
<polygon points="662.0,700.0 766.7,747.5 763.3,792.5 703.3,804.2 660.0,789.2" fill="#25366a" stroke="#25366a" stroke-width="0.6" stroke-linejoin="round"/>
<polygon points="675.0,757.5 720.0,734.2 808.3,862.5 770.0,880.0 721.7,831.7 703.3,804.2" fill="#25366a" stroke="#25366a" stroke-width="0.6" stroke-linejoin="round"/>
<polyline points="675.0,757.5 720.0,734.2" fill="none" stroke="#2f4485" stroke-width="0.9"/>
<polyline points="675.0,757.5 703.3,804.2" fill="none" stroke="#2f4485" stroke-width="0.9"/>
<polygon points="720.0,734.2 724.5,733.0 812.0,860.5 808.3,862.5" fill="#1c2a55" stroke="#1c2a55" stroke-width="0.6" stroke-linejoin="round"/>
<polygon points="663.3,592.0 669.8,593.0 665.5,680.0 658.5,683.0" fill="#6e5a00" stroke="#e8c400" stroke-width="1" stroke-linejoin="round"/>
<polygon points="654.5,708.0 664.5,710.0 660.0,786.0 651.5,788.0" fill="#6e5a00" stroke="#e8c400" stroke-width="1" stroke-linejoin="round"/>
<g transform="translate(660.0 594.0) rotate(14)"><path d="M-3.5 -9.6 L3 -8.6 L3 8.6 L-3.5 9.6 Q-9 6 -9 0 Q-9 -6 -3.5 -9.6 Z" fill="#f3d000" stroke="#a88500" stroke-width=".7"/><path d="M-6.5 -6 L-1 -8.6 M-8.2 0 L-1 0" stroke="#d4b200" stroke-width=".6" fill="none"/><ellipse cx="3.2" cy="0" rx="4.2" ry="8.6" fill="#6e5a00" stroke="#c9a700" stroke-width=".8"/></g>
<g transform="translate(656.5 672.0) rotate(14)"><path d="M-3.5 -9.6 L3 -8.6 L3 8.6 L-3.5 9.6 Q-9 6 -9 0 Q-9 -6 -3.5 -9.6 Z" fill="#f3d000" stroke="#a88500" stroke-width=".7"/><path d="M-6.5 -6 L-1 -8.6 M-8.2 0 L-1 0" stroke="#d4b200" stroke-width=".6" fill="none"/><ellipse cx="3.2" cy="0" rx="4.2" ry="8.6" fill="#6e5a00" stroke="#c9a700" stroke-width=".8"/></g>
<g transform="translate(654.2 713.3) rotate(14)"><path d="M-3.5 -9.6 L3 -8.6 L3 8.6 L-3.5 9.6 Q-9 6 -9 0 Q-9 -6 -3.5 -9.6 Z" fill="#f3d000" stroke="#a88500" stroke-width=".7"/><path d="M-6.5 -6 L-1 -8.6 M-8.2 0 L-1 0" stroke="#d4b200" stroke-width=".6" fill="none"/><ellipse cx="3.2" cy="0" rx="4.2" ry="8.6" fill="#6e5a00" stroke="#c9a700" stroke-width=".8"/></g>
<g transform="translate(650.8 781.7) rotate(14)"><path d="M-3.5 -9.6 L3 -8.6 L3 8.6 L-3.5 9.6 Q-9 6 -9 0 Q-9 -6 -3.5 -9.6 Z" fill="#f3d000" stroke="#a88500" stroke-width=".7"/><path d="M-6.5 -6 L-1 -8.6 M-8.2 0 L-1 0" stroke="#d4b200" stroke-width=".6" fill="none"/><ellipse cx="3.2" cy="0" rx="4.2" ry="8.6" fill="#6e5a00" stroke="#c9a700" stroke-width=".8"/></g>
<polygon points="668.5,588.0 914.2,675.8 933.3,658.0 936.7,657.0 936.7,759.5 915.3,797.7 665.0,681.7" fill="#ad4e1b" stroke="#ad4e1b" stroke-width="0.6" stroke-linejoin="round"/>
<polygon points="933.3,657.5 936.9,656.5 936.9,759.5 933.3,761.0" fill="#c55a1f" stroke="#c55a1f" stroke-width="0.6" stroke-linejoin="round"/>
<polygon points="642.5,698.3 665.0,681.7 936.0,760.0 955.6,759.5 915.3,794.3" fill="#c95a1e" stroke="#c95a1e" stroke-width="0.6" stroke-linejoin="round"/>
<polygon points="642.5,698.3 915.3,794.3 915.3,798.5 642.5,702.5" fill="#b8521c" stroke="#b8521c" stroke-width="0.6" stroke-linejoin="round"/>
<polygon points="915.3,794.3 955.6,759.5 955.6,763.0 915.3,798.5" fill="#7a3410" stroke="#7a3410" stroke-width="0.6" stroke-linejoin="round"/>
<polygon points="649.2,577.5 694.0,540.4 956.7,635.8 913.3,670.8" fill="#c95a1e" stroke="#c95a1e" stroke-width="0.6" stroke-linejoin="round"/>
<polygon points="649.2,577.5 913.3,670.8 914.2,675.8 649.2,581.9" fill="#b8521c" stroke="#b8521c" stroke-width="0.6" stroke-linejoin="round"/>
<polygon points="913.3,670.8 956.7,635.8 956.7,641.2 914.2,675.8" fill="#7a3410" stroke="#7a3410" stroke-width="0.6" stroke-linejoin="round"/>
<polygon points="675.2,456.8 745.8,481.5 777.5,546.7 776.7,590.0 770.0,597.0 668.0,566.0 678.5,461.0" fill="#25366a" stroke="#25366a" stroke-width="0.6" stroke-linejoin="round"/>
<polygon points="675.2,456.8 745.8,481.5 741.2,484.8 678.5,461.0" fill="#2a3f7e" stroke="#2a3f7e" stroke-width="0.6" stroke-linejoin="round"/>
<polyline points="688.5,515.3 742.9,486.0" fill="none" stroke="#30468a" stroke-width="1"/>
<polyline points="688.5,515.3 727.0,572.0" fill="none" stroke="#30468a" stroke-width="0.9"/>
<polyline points="727.0,572.0 776.5,546.5" fill="none" stroke="#30468a" stroke-width="0.9"/>
<polygon points="668.3,560.5 770.5,590.3 767.3,599.6 668.3,568.2" fill="#ffe92b" stroke="#ffe92b" stroke-width="0.6" stroke-linejoin="round"/>
<polygon points="670.0,460.8 678.3,462.5 675.0,561.0 667.0,562.0" fill="#6e5a00" stroke="#e8c400" stroke-width="0.9" stroke-linejoin="round"/>
<g transform="translate(666.8 482.7) rotate(14)"><path d="M-3.5 -9.6 L3 -8.6 L3 8.6 L-3.5 9.6 Q-9 6 -9 0 Q-9 -6 -3.5 -9.6 Z" fill="#f3d000" stroke="#a88500" stroke-width=".7"/><path d="M-6.5 -6 L-1 -8.6 M-8.2 0 L-1 0" stroke="#d4b200" stroke-width=".6" fill="none"/><ellipse cx="3.2" cy="0" rx="4.2" ry="8.6" fill="#6e5a00" stroke="#c9a700" stroke-width=".8"/></g>
<g transform="translate(663.3 552.5) rotate(14)"><path d="M-3.5 -9.6 L3 -8.6 L3 8.6 L-3.5 9.6 Q-9 6 -9 0 Q-9 -6 -3.5 -9.6 Z" fill="#f3d000" stroke="#a88500" stroke-width=".7"/><path d="M-6.5 -6 L-1 -8.6 M-8.2 0 L-1 0" stroke="#d4b200" stroke-width=".6" fill="none"/><ellipse cx="3.2" cy="0" rx="4.2" ry="8.6" fill="#6e5a00" stroke="#c9a700" stroke-width=".8"/></g>
<polygon points="649.7,572.7 664.0,556.5 668.5,561.5 655.0,578.0" fill="#6e5a00" stroke="#e8c400" stroke-width="0.9" stroke-linejoin="round"/>
<polygon points="770.5,589.0 777.3,591.0 773.3,598.5 767.3,599.6" fill="#1c2a55" stroke="#1c2a55" stroke-width="0.6" stroke-linejoin="round"/>
<polygon points="642.5,694.5 661.0,678.5 666.0,682.5 648.0,699.5" fill="#6e5a00" stroke="#e8c400" stroke-width="0.9" stroke-linejoin="round"/>
<polygon points="744.8,519.3 750.8,526.0 747.6,534.2 738.6,535.7 741.2,537.3 750.2,535.8 753.4,527.6 747.4,520.9" fill="#8a6d00" stroke="#6e5a00" stroke-width="0.6" stroke-linejoin="round"/>
<polygon points="750.8,526.0 747.6,534.2 738.6,535.7 732.6,529.0 735.8,520.8 744.8,519.3" fill="#c8a000" stroke="#9a7b00" stroke-width="0.7" stroke-linejoin="round"/>
<polygon points="721.9,530.9 727.4,537.1 724.5,544.7 716.1,546.1 718.7,547.7 727.1,546.3 730.0,538.7 724.5,532.5" fill="#8a6d00" stroke="#6e5a00" stroke-width="0.6" stroke-linejoin="round"/>
<polygon points="727.4,537.1 724.5,544.7 716.1,546.1 710.6,539.9 713.5,532.3 721.9,530.9" fill="#c8a000" stroke="#9a7b00" stroke-width="0.7" stroke-linejoin="round"/>
<polygon points="710.0,761.4 716.2,768.4 712.9,777.0 703.4,778.6 706.0,780.2 715.5,778.6 718.8,770.0 712.6,763.0" fill="#8a6d00" stroke="#6e5a00" stroke-width="0.6" stroke-linejoin="round"/>
<polygon points="716.2,768.4 712.9,777.0 703.4,778.6 697.2,771.6 700.5,763.0 710.0,761.4" fill="#c8a000" stroke="#9a7b00" stroke-width="0.7" stroke-linejoin="round"/>
<polygon points="730.0,790.6 736.2,797.6 732.9,806.2 723.4,807.8 726.0,809.4 735.5,807.8 738.8,799.2 732.6,792.2" fill="#8a6d00" stroke="#6e5a00" stroke-width="0.6" stroke-linejoin="round"/>
<polygon points="736.2,797.6 732.9,806.2 723.4,807.8 717.2,800.8 720.5,792.2 730.0,790.6" fill="#c8a000" stroke="#9a7b00" stroke-width="0.7" stroke-linejoin="round"/>
<polygon points="741.2,484.4 790.0,459.5 795.0,464.2 795.0,472.0 744.0,500.0" fill="#1f2d5e" stroke="#1f2d5e" stroke-width="0.6" stroke-linejoin="round"/>
<polygon points="742.9,490.7 788.9,466.4 792.5,468.5 793.0,476.0 743.7,504.0" fill="#ffd800" stroke="#ffd800" stroke-width="0.6" stroke-linejoin="round"/>
<polygon points="768.0,540.0 826.0,511.0 829.5,520.5 780.0,548.5" fill="#1f2d5e" stroke="#1f2d5e" stroke-width="0.6" stroke-linejoin="round"/>
<polygon points="778.0,543.0 826.5,516.5 828.0,519.0 779.5,546.0" fill="#c49a00" stroke="#c49a00" stroke-width="0.6" stroke-linejoin="round"/>
<polygon points="736.7,503.4 763.6,486.6 846.5,436.2 858.9,441.8 876.8,477.7 875.7,482.1 858.9,496.7 765.9,545.4 758.0,541.5 743.4,520.2 737.3,510.2" fill="#6c8ab1" stroke="#a3c8f2" stroke-width="1.1" stroke-linejoin="round"/>
<polygon points="736.9,503.4 846.5,436.2 828.6,462.5 741.8,514.6" fill="#8fb3e0" stroke="#8fb3e0" stroke-width="0.6" stroke-linejoin="round"/>
<polygon points="760.3,537.0 848.8,495.6 858.9,496.7 765.9,545.4" fill="#5a7496" stroke="#5a7496" stroke-width="0.6" stroke-linejoin="round"/>
<polygon points="846.5,436.2 858.9,441.8 876.8,477.7 875.7,482.1 858.9,496.7 847.6,495.6 825.8,457.5 828.6,450.8" fill="#86abd9" stroke="#a3c8f2" stroke-width="0.9" stroke-linejoin="round"/>
<polygon points="831.4,456.9 856.1,445.7 872.1,474.9 848.8,490.9" fill="#6c8ab1" stroke="#6c8ab1" stroke-width="0.6" stroke-linejoin="round"/>
<polygon points="829.7,452.5 846.0,439.6 848.8,442.9 842.0,448.0 831.4,455.8" fill="#566e8e" stroke="#566e8e" stroke-width="0.6" stroke-linejoin="round"/>
<polygon points="858.3,494.5 874.5,481.6 875.1,477.7 872.1,474.9 848.8,490.9 850.4,495.0" fill="#566e8e" stroke="#566e8e" stroke-width="0.6" stroke-linejoin="round"/>
<polygon points="856.1,445.7 858.9,442.9 875.1,476.5 872.1,474.9" fill="#7d9fcf" stroke="#7d9fcf" stroke-width="0.6" stroke-linejoin="round"/>
<polygon points="827.5,454.7 831.4,456.9 848.8,490.9 847.6,495.0" fill="#7d9fcf" stroke="#7d9fcf" stroke-width="0.6" stroke-linejoin="round"/>
<polyline points="846.5,436.8 847.6,441.8" fill="none" stroke="#4f6580" stroke-width="0.8"/>
<polyline points="852.1,438.4 851.6,443.5" fill="none" stroke="#4f6580" stroke-width="0.8"/>
<polyline points="826.4,456.9 830.8,458.6" fill="none" stroke="#4f6580" stroke-width="0.8"/>
<polyline points="827.5,463.7 832.0,462.5" fill="none" stroke="#4f6580" stroke-width="0.8"/>
<polyline points="876.2,474.3 871.7,473.2" fill="none" stroke="#4f6580" stroke-width="0.8"/>
<polyline points="874.5,468.1 870.6,469.3" fill="none" stroke="#4f6580" stroke-width="0.8"/>
<polyline points="853.2,496.1 851.6,492.2" fill="none" stroke="#4f6580" stroke-width="0.8"/>
<polyline points="857.7,496.1 855.5,491.7" fill="none" stroke="#4f6580" stroke-width="0.8"/>
<polyline points="736.9,503.4 846.5,436.2" fill="none" stroke="#a3c8f2" stroke-width="1"/>
<polyline points="739.0,508.5 827.5,453.6" fill="none" stroke="#7c9cc6" stroke-width="0.8"/>
<polyline points="737.8,505.7 836.4,445.2" fill="none" stroke="#56708f" stroke-width="0.6"/>
<polyline points="741.8,514.6 828.6,462.5" fill="none" stroke="#a3c8f2" stroke-width="0.9"/>
<polyline points="760.3,537.0 848.8,495.6" fill="none" stroke="#a3c8f2" stroke-width="1"/>
<polyline points="765.9,545.4 858.9,496.7" fill="none" stroke="#a3c8f2" stroke-width="1"/>
<polyline points="763.6,541.5 853.2,496.1" fill="none" stroke="#4f6580" stroke-width="0.7"/>
<polyline points="831.4,456.9 856.1,445.7" fill="none" stroke="#9cc4f0" stroke-width="0.7"/>
<polyline points="872.1,474.9 848.8,490.9" fill="none" stroke="#9cc4f0" stroke-width="0.7"/>
<polyline points="834.2,461.4 858.9,450.2" fill="none" stroke="#9cc4f0" stroke-width="0.7"/>
<polyline points="844.3,481.0 868.9,469.3" fill="none" stroke="#9cc4f0" stroke-width="0.7"/>
<polyline points="837.6,474.3 867.8,459.7" fill="none" stroke="#a9cdf5" stroke-width="0.7" stroke-dasharray="5 3 1 3"/>
<polygon points="719.2,835.8 741.7,825.0 758.3,813.3 763.0,806.5 771.7,800.0 851.7,915.0 835.0,932.0 820.0,942.0 798.3,951.7" fill="#6f8db5" stroke="#a3c8f2" stroke-width="1" stroke-linejoin="round"/>
<polygon points="758.3,813.3 771.7,800.0 851.7,915.0 833.3,931.7" fill="#4f6580" stroke="#4f6580" stroke-width="0.6" stroke-linejoin="round"/>
<polygon points="744.0,823.5 758.3,813.3 833.3,931.7 820.0,941.0" fill="#7595bf" stroke="#7595bf" stroke-width="0.6" stroke-linejoin="round"/>
<polyline points="746.5,821.5 823.0,939.0" fill="none" stroke="#a3c8f2" stroke-width="0.8"/>
<polyline points="754.5,816.0 830.0,934.0" fill="none" stroke="#a3c8f2" stroke-width="0.8"/>
<polygon points="765.0,800.0 770.5,797.5 812.0,860.5 806.5,864.0" fill="#1c2a55" stroke="#1c2a55" stroke-width="0.6" stroke-linejoin="round"/>
<polygon points="760.8,810.0 766.0,807.0 804.5,865.5 799.0,869.5" fill="#c49a00" stroke="#c49a00" stroke-width="0.6" stroke-linejoin="round"/>
<polyline points="719.2,835.8 798.3,951.7" fill="none" stroke="#a3c8f2" stroke-width="1"/>
<polyline points="723.5,833.8 802.5,950.0" fill="none" stroke="#a3c8f2" stroke-width="0.8"/>
<polyline points="741.7,825.0 820.0,942.0" fill="none" stroke="#a3c8f2" stroke-width="0.9"/>
<polyline points="750.0,819.5 827.0,936.0" fill="none" stroke="#56708f" stroke-width="0.7" stroke-dasharray="1.5 1.5"/>
<polyline points="758.3,813.3 833.3,931.7" fill="none" stroke="#a3c8f2" stroke-width="0.9"/>
<polyline points="771.7,800.0 851.7,915.0" fill="none" stroke="#a3c8f2" stroke-width="1.2"/>
<polyline points="768.0,802.5 848.0,918.0" fill="none" stroke="#3f526b" stroke-width="0.9"/>
<polyline points="868.3,457.5 891.7,445.0" fill="none" stroke="#9cc4f0" stroke-width="0.9" stroke-dasharray="7 3 1.5 3"/>
<polyline points="828.3,936.7 860.0,985.0" fill="none" stroke="#9cc4f0" stroke-width="0.9" stroke-dasharray="7 3 1.5 3"/>
<polyline points="933.3,716.7 1052.0,759.0" fill="none" stroke="#9cc4f0" stroke-width="0.9" stroke-dasharray="7 3 1.5 3"/>
<polyline points="672.0,563.0 706.0,544.5" fill="none" stroke="#9cc4f0" stroke-width="0.8" stroke-dasharray="7 3 1.5 3"/>
<polyline points="676.0,716.0 698.0,746.0" fill="none" stroke="#9cc4f0" stroke-width="0.8" stroke-dasharray="7 3 1.5 3"/>
<g transform="translate(934.6 423.1) rotate(152.53)"><rect x="0" y="-1.80" width="37.1" height="3.60" rx="1.5" fill="url(#gShaft)"/><ellipse cx="36.1" cy="0" rx="2.6" ry="5.8" fill="#8c8c8c"/><path d="M36.1 -5.2 L48.1 0 L36.1 5.2 Z" fill="url(#gHead)"/></g>
<g transform="translate(860.0 985.0) rotate(55.76)"><rect x="0" y="-2.00" width="50.0" height="4.00" rx="1.5" fill="url(#gShaft)"/><ellipse cx="49.0" cy="0" rx="2.6" ry="6.5" fill="#8c8c8c"/><path d="M49.0 -6.0 L67.0 0 L49.0 6.0 Z" fill="url(#gHead)"/></g>
<polyline points="897.7,1040.4 903.6,1049.0" fill="none" stroke="#9cc4f0" stroke-width="0.9"/>
<g transform="translate(580.5 1022.0) rotate(-87.92)"><rect x="0" y="-2.00" width="41.8" height="4.00" rx="1.5" fill="url(#gShaft)"/><ellipse cx="40.8" cy="0" rx="2.6" ry="6.5" fill="#8c8c8c"/><path d="M40.8 -6.0 L57.8 0 L40.8 6.0 Z" fill="url(#gHead)"/></g>
<polygon points="561.7,952.5 566.0,951.5 583.5,961.5 577.0,961.0" fill="#8a8a8a" stroke="#8a8a8a" stroke-width="0.6" stroke-linejoin="round"/>
<path d="M957 699.5 Q986 708 983 739 L965.5 757 L971.5 741.5 Q976.5 722 953 709.5 Z" fill="url(#gArc)"/>
<polygon points="952.3,697.0 958.8,692.5 958.5,735.0 962.5,733.0 953.5,753.0 949.5,737.0 952.3,738.0" fill="#5c5c5c" stroke="#5c5c5c" stroke-width="0.6" stroke-linejoin="round"/>
<path d="M602.2 272 Q602.5 250 611 241 L624 235.8 L629.5 241.5 Q616 251 613.4 275.5 Z" fill="url(#gArcL)"/>
<path d="M624 235.8 Q643 240 648 266 L641 275 Q637 254 628.5 242.5 Z" fill="url(#gArcR)"/>
<path d="M624 236 Q636 239 643.6 246.4" fill="none" stroke="#555" stroke-width=".8"/>
<path d="M597 250.6 L604.8 244.6 L603 254.5 Z" fill="#eee" stroke="#666" stroke-width=".7"/>
<polyline points="511.5,385.6 522.0,390.2" fill="none" stroke="#111" stroke-width="0.8"/>
<polygon points="515.0,383.2 520.5,389.3 517.0,390.4" fill="#111" stroke="#111" stroke-width="0.6" stroke-linejoin="round"/>
<polyline points="710.0,381.7 735.0,388.4 707.8,410.8" fill="none" stroke="#111" stroke-width="0.8"/>
<polygon points="720.0,384.6 730.5,387.3 729.6,389.4" fill="#111" stroke="#111" stroke-width="0.6" stroke-linejoin="round"/>
<polyline points="680.2,446.3 724.1,464.7" fill="none" stroke="#111" stroke-width="0.9"/>
<polygon points="717.8,464.2 716.3,469.8 719.3,469.8" fill="#111" stroke="#111" stroke-width="0.6" stroke-linejoin="round"/>
<rect x="610.8" y="247" width="20" height="14.7" fill="#c8c8c8"/>
<text x="620.8" y="258.5" font-family="Liberation Sans, sans-serif" font-size="11.5" fill="#222" text-anchor="middle">0,4</text>
<rect x="642.5" y="244.2" width="27.5" height="15" fill="#c8c8c8"/>
<text x="656.2" y="255.8" font-family="Liberation Sans, sans-serif" font-size="11.5" fill="#222" text-anchor="middle">-50,0</text>
<rect x="943.3" y="403.7" width="30" height="14.3" fill="#c8c8c8"/>
<text x="958.3" y="415.0" font-family="Liberation Sans, sans-serif" font-size="11.5" fill="#222" text-anchor="middle">-50,0</text>
<rect x="955" y="668.3" width="30.8" height="14.7" fill="#c8c8c8"/>
<text x="970.4" y="679.8" font-family="Liberation Sans, sans-serif" font-size="11.5" fill="#222" text-anchor="middle">-20,0</text>
<rect x="970.8" y="733.3" width="30.9" height="14.2" fill="#c8c8c8"/>
<text x="986.2" y="744.5" font-family="Liberation Sans, sans-serif" font-size="11.5" fill="#222" text-anchor="middle">100,0</text>
<rect x="906.3" y="1039.8" width="27" height="14.2" fill="#c8c8c8"/>
<text x="919.8" y="1051.0" font-family="Liberation Sans, sans-serif" font-size="11.5" fill="#222" text-anchor="middle">50,0</text>
<rect x="578.3" y="1018" width="32.2" height="14.5" fill="#c8c8c8"/>
<text x="594.4" y="1029.4" font-family="Liberation Sans, sans-serif" font-size="11.5" fill="#222" text-anchor="middle">110,7</text>
<rect x="712.2" y="530.8" width="22" height="18.4" fill="#fff"/>
<text x="723.2" y="544.7" font-family="Liberation Sans, sans-serif" font-size="13" fill="#111" text-anchor="middle">D1</text>
<rect x="698" y="782.5" width="21.2" height="18.3" fill="#fff"/>
<text x="708.6" y="796.3" font-family="Liberation Sans, sans-serif" font-size="13" fill="#111" text-anchor="middle">D2</text>
<rect x="761.7" y="663.3" width="13" height="18" fill="#fff"/>
<text x="768.2" y="677.0" font-family="Liberation Sans, sans-serif" font-size="13" fill="#111" text-anchor="middle">B</text>
<rect x="558" y="745" width="12.8" height="17.5" fill="#fff"/>
<text x="564.4" y="758.4" font-family="Liberation Sans, sans-serif" font-size="13" fill="#111" text-anchor="middle">C</text>
</svg>
<!--MODEL_END-->
<!--CUBE_START--><svg class="abs" style="left:1240px;top:200px" width="118" height="100" viewBox="1240 200 118 100">
<defs><radialGradient id="cshadow"><stop offset="0" stop-color="#888" stop-opacity=".55"/><stop offset="1" stop-color="#fff" stop-opacity="0"/></radialGradient></defs>
<ellipse cx="1297.3" cy="266.4" rx="41" ry="23.3" fill="#bfbfbf"/>
<ellipse cx="1297.5" cy="263.4" rx="31.5" ry="16.3" fill="#fff"/>
<ellipse cx="1300" cy="268" rx="27" ry="11" fill="url(#cshadow)"/>
<polygon points="1293.9,215.9 1326.2,226.7 1306.8,244 1270.2,230.2" fill="#6f6f6f"/>
<polygon points="1270.2,230.2 1306.8,244 1303.8,277.6 1272.3,261.2" fill="#595959"/>
<polygon points="1306.8,244 1326.2,226.7 1322.8,256.5 1303.8,277.6" fill="#606060"/>
<path d="M1293.9 215.9 L1326.2 226.7 L1322.8 256.5 L1303.8 277.6 L1272.3 261.2 L1270.2 230.2 Z M1270.2 230.2 L1306.8 244 L1326.2 226.7 M1306.8 244 L1303.8 277.6" fill="none" stroke="#111" stroke-width="1" stroke-linejoin="round"/>
<path d="M1293.9 215.9 L1293.5 245 L1272.3 261.2 M1293.5 245 L1322.8 256.5" fill="none" stroke="#7d7d7d" stroke-width=".5"/>
<text x="1283.5" y="258.5" font-family="Liberation Sans, sans-serif" font-size="7" font-weight="bold" fill="#fff" transform="rotate(22 1288 256)">+Y</text>
<text x="1296" y="231" font-family="Liberation Sans, sans-serif" font-size="5.5" font-weight="bold" fill="#fff" transform="rotate(-25 1298 229)">+Z</text>
<text x="1313.5" y="254" font-family="Liberation Sans, sans-serif" font-size="5.5" font-weight="bold" fill="#fff" transform="rotate(-70 1315.5 251)">+X</text>
<text x="0" y="0" font-family="Liberation Sans, sans-serif" font-size="15.5" font-weight="bold" fill="#333" text-anchor="middle" transform="translate(1274.5 285.5) rotate(-33) skewX(-18)">Y</text>
<text x="1261" y="248" font-family="Liberation Sans, sans-serif" font-size="8" font-weight="bold" fill="#222" transform="rotate(-20 1265 245)">-X</text>
<path d="M1327.5 272.4 L1337.5 276.8 M1334.5 273.8 L1338.7 277.2 L1333.6 277.6" fill="none" stroke="#333" stroke-width=".8"/>
</svg>
<!--CUBE_END-->
<!--TREE_START--><!-- tree -->
<div class="abs" style="left:1230.6px;top:337.1px;width:0;height:0;border-left:5.7px solid transparent;border-bottom:5.8px solid #444"></div>
<svg class="abs" style="left:1243px;top:373.6px" width="101" height="20" viewBox="0 0 101 20"><path d="M0 0 H86.2 L100.2 9.7 L86.2 19.4 H0 Z" fill="#f26f21"/></svg>
<div class="abs" style="left:1252.6px;top:356.5px;width:10.6px;height:10.3px;background:#e6e6e6;border-radius:2px"></div>
<svg class="abs" style="left:1252px;top:353.5px" width="16" height="15" viewBox="0 0 16 15"><path d="M3 7.5 L6.3 11.6 L13.6 1.8" fill="none" stroke="#f7931e" stroke-width="1.7"/></svg>
<div class="abs" style="left:1252.6px;top:379.1px;width:10.6px;height:10.2px;border:1.3px solid #f3f3f3;border-radius:2px"></div>
<svg class="abs" style="left:1252px;top:375.9px" width="16" height="15" viewBox="0 0 16 15"><path d="M3 7.5 L6.3 11.6 L13.6 1.8" fill="none" stroke="#f7931e" stroke-width="1.7"/></svg>
<div class="abs" style="left:1252.6px;top:401.4px;width:10.6px;height:10.3px;background:#e6e6e6;border-radius:2px"></div>
<svg class="abs" style="left:1252px;top:398.4px" width="16" height="15" viewBox="0 0 16 15"><path d="M3 7.5 L6.3 11.6 L13.6 1.8" fill="none" stroke="#f7931e" stroke-width="1.7"/></svg>
<div class="abs" style="left:1252.6px;top:423.8px;width:10.6px;height:10.3px;background:#e6e6e6;border-radius:2px"></div>
<svg class="abs" style="left:1252px;top:420.8px" width="16" height="15" viewBox="0 0 16 15"><path d="M3 7.5 L6.3 11.6 L13.6 1.8" fill="none" stroke="#f7931e" stroke-width="1.7"/></svg>
<div class="abs" style="left:1230.6px;top:448.0px;width:0;height:0;border-left:5.7px solid transparent;border-bottom:5.8px solid #444"></div>
<div class="abs" style="left:1252.6px;top:468.6px;width:10.6px;height:10.3px;background:#e6e6e6;border-radius:2px"></div>
<svg class="abs" style="left:1252px;top:465.6px" width="16" height="15" viewBox="0 0 16 15"><path d="M3 7.5 L6.3 11.6 L13.6 1.8" fill="none" stroke="#f7931e" stroke-width="1.7"/></svg>
<div class="abs" style="left:1230.6px;top:492.9px;width:0;height:0;border-left:5.7px solid transparent;border-bottom:5.8px solid #444"></div>
<div class="abs" style="left:1252.6px;top:513.5px;width:10.6px;height:10.3px;background:#e6e6e6;border-radius:2px"></div>
<svg class="abs" style="left:1252px;top:510.5px" width="16" height="15" viewBox="0 0 16 15"><path d="M3 7.5 L6.3 11.6 L13.6 1.8" fill="none" stroke="#f7931e" stroke-width="1.7"/></svg>
<div class="abs" style="left:1252.6px;top:535.9px;width:10.6px;height:10.3px;background:#e6e6e6;border-radius:2px"></div>
<svg class="abs" style="left:1252px;top:532.9px" width="16" height="15" viewBox="0 0 16 15"><path d="M3 7.5 L6.3 11.6 L13.6 1.8" fill="none" stroke="#f7931e" stroke-width="1.7"/></svg>
<div class="abs" style="left:1252.6px;top:558.4px;width:10.6px;height:10.3px;background:#e6e6e6;border-radius:2px"></div>
<svg class="abs" style="left:1252px;top:555.4px" width="16" height="15" viewBox="0 0 16 15"><path d="M3 7.5 L6.3 11.6 L13.6 1.8" fill="none" stroke="#f7931e" stroke-width="1.7"/></svg>
<div class="abs" style="left:1252.6px;top:580.8px;width:10.6px;height:10.3px;background:#e6e6e6;border-radius:2px"></div>
<svg class="abs" style="left:1252px;top:577.8px" width="16" height="15" viewBox="0 0 16 15"><path d="M3 7.5 L6.3 11.6 L13.6 1.8" fill="none" stroke="#f7931e" stroke-width="1.7"/></svg>
<div class="abs" style="left:1252.6px;top:603.2px;width:10.6px;height:10.3px;background:#e6e6e6;border-radius:2px"></div>
<svg class="abs" style="left:1252px;top:600.2px" width="16" height="15" viewBox="0 0 16 15"><path d="M3 7.5 L6.3 11.6 L13.6 1.8" fill="none" stroke="#f7931e" stroke-width="1.7"/></svg>
<div class="abs" style="left:1252.6px;top:625.7px;width:10.6px;height:10.3px;background:#e6e6e6;border-radius:2px"></div>
<svg class="abs" style="left:1252px;top:622.7px" width="16" height="15" viewBox="0 0 16 15"><path d="M3 7.5 L6.3 11.6 L13.6 1.8" fill="none" stroke="#f7931e" stroke-width="1.7"/></svg>
<div class="abs" style="left:1252.6px;top:648.1px;width:10.6px;height:10.3px;background:#e6e6e6;border-radius:2px"></div>
<svg class="abs" style="left:1252px;top:645.1px" width="16" height="15" viewBox="0 0 16 15"><path d="M3 7.5 L6.3 11.6 L13.6 1.8" fill="none" stroke="#f7931e" stroke-width="1.7"/></svg>
<div class="abs" style="left:1252.6px;top:670.5px;width:10.6px;height:10.3px;background:#e6e6e6;border-radius:2px"></div>
<svg class="abs" style="left:1252px;top:667.5px" width="16" height="15" viewBox="0 0 16 15"><path d="M3 7.5 L6.3 11.6 L13.6 1.8" fill="none" stroke="#f7931e" stroke-width="1.7"/></svg>
<div class="abs" style="left:1252.6px;top:692.9px;width:10.6px;height:10.3px;background:#e6e6e6;border-radius:2px"></div>
<svg class="abs" style="left:1252px;top:689.9px" width="16" height="15" viewBox="0 0 16 15"><path d="M3 7.5 L6.3 11.6 L13.6 1.8" fill="none" stroke="#f7931e" stroke-width="1.7"/></svg>
<div class="abs" style="left:1252.6px;top:715.4px;width:10.6px;height:10.3px;background:#e6e6e6;border-radius:2px"></div>
<svg class="abs" style="left:1252px;top:712.4px" width="16" height="15" viewBox="0 0 16 15"><path d="M3 7.5 L6.3 11.6 L13.6 1.8" fill="none" stroke="#f7931e" stroke-width="1.7"/></svg>
<div class="abs" style="left:1227.8px;top:369.8px;width:126.2px;height:27.1px;border:4px solid #fb0007;border-radius:8px"></div>
<div class="t" style="left:1096.4px;top:207.3px;font-size:12px;color:#f26f21;font-weight:bold;letter-spacing:-0.22px">Production cost</div>
<div class="t" style="left:1190.5px;top:207.3px;font-size:12px;color:#333">-</div>
<div class="t" style="left:1200.0px;top:207.3px;font-size:12px;color:#111;font-weight:bold;letter-spacing:-0.31px">132 €</div>
<div class="t" style="left:1231.8px;top:311.8px;font-size:12px;color:#333;font-weight:bold;letter-spacing:0.19px">CON1</div>
<div class="t" style="left:1253.2px;top:334.1px;font-size:12px;color:#333;font-weight:bold;letter-spacing:0.56px">Members</div>
<div class="t" style="left:1280.0px;top:355.4px;font-size:12.5px;color:#333;letter-spacing:-2.03px;text-decoration:underline;text-underline-offset:1.5px">C</div>
<div class="t" style="left:1280.0px;top:377.8px;font-size:12.5px;color:#fff;font-weight:bold;letter-spacing:-2.13px">B</div>
<div class="t" style="left:1280.0px;top:400.2px;font-size:12.5px;color:#333;letter-spacing:-1.19px">D1</div>
<div class="t" style="left:1280.0px;top:422.6px;font-size:12.5px;color:#333;letter-spacing:-0.09px">D2</div>
<div class="t" style="left:1253.2px;top:445.0px;font-size:12px;color:#333;font-weight:bold;letter-spacing:0.23px">Load effects</div>
<div class="t" style="left:1280.0px;top:467.5px;font-size:12.5px;color:#333;letter-spacing:-1.62px">LE1</div>
<div class="t" style="left:1253.2px;top:489.9px;font-size:12px;color:#333;font-weight:bold;letter-spacing:0.34px">Operations</div>
<div class="t" style="left:1280.0px;top:512.4px;font-size:12.5px;color:#333;letter-spacing:-1.65px">EP1</div>
<div class="t" style="left:1280.0px;top:534.8px;font-size:12.5px;color:#333;letter-spacing:-1.06px">STIFF1</div>
<div class="t" style="left:1280.0px;top:557.2px;font-size:12.5px;color:#333;letter-spacing:-0.26px">WID1</div>
<div class="t" style="left:1280.0px;top:579.7px;font-size:12.5px;color:#333;letter-spacing:-1.15px">CPL1</div>
<div class="t" style="left:1280.0px;top:602.1px;font-size:12.5px;color:#333;letter-spacing:-0.82px">CPL2</div>
<div class="t" style="left:1280.0px;top:624.5px;font-size:12.5px;color:#333;letter-spacing:-0.42px">WPLN1</div>
<div class="t" style="left:1280.0px;top:646.9px;font-size:12.5px;color:#333;letter-spacing:-1.00px">PCUT1</div>
<div class="t" style="left:1280.0px;top:669.4px;font-size:12.5px;color:#333;letter-spacing:-0.06px">WPLN2</div>
<div class="t" style="left:1280.0px;top:691.8px;font-size:12.5px;color:#333;letter-spacing:-0.60px">PCUT2</div>
<div class="t" style="left:1280.0px;top:714.2px;font-size:12.5px;color:#333;letter-spacing:-0.78px">STIFF2</div>
<!--TREE_END-->
<!--PANEL_START--><!-- right panel -->
<div class="abs" style="left:1511px;top:226.6px;width:344.8px;height:24px;background:#e4e4e4"></div>
<div class="abs" style="left:1843.9px;top:236px;width:0;height:0;border-left:3.7px solid transparent;border-right:3.7px solid transparent;border-top:5px solid #111"></div>
<div class="abs" style="left:1859px;top:226.6px;width:22.4px;height:23.8px;background:#999"></div>
<div class="abs" style="left:1884.7px;top:226.6px;width:22.5px;height:23.8px;background:#999"></div>
<div class="abs" style="left:1888px;top:236px;width:16.3px;height:4.4px;background:#fff"></div>
<div class="abs" style="left:1893.6px;top:230.5px;width:4.8px;height:15.8px;background:#fff"></div>
<svg class="abs" style="left:1859px;top:226px" width="23" height="25" viewBox="1859 226 23 25"><path d="M1864.6 244.6 L1872.4 231.6 L1875.8 233.6 L1868 246.6 Z M1873 230.5 L1873.6 229.6 Q1874.4 228.6 1875.6 229.3 L1876.6 229.9 Q1877.6 230.6 1877 231.7 L1876.4 232.6 Z M1864.1 245.6 L1867.2 247.4 L1863.6 249 Z" fill="#fff"/></svg>
<div class="abs" style="left:1516.2px;top:257.9px;width:10.6px;height:10.2px;background:#e2e2e2;border-radius:2px"></div>
<div class="abs" style="left:1516.2px;top:283.5px;width:10.6px;height:10.2px;background:#e2e2e2;border-radius:2px"></div>
<div class="abs" style="left:1511px;top:303.2px;width:396.2px;height:24px;background:#e4e4e4"></div>
<div class="abs" style="left:1894.9px;top:312.9px;width:0;height:0;border-left:3.7px solid transparent;border-right:3.7px solid transparent;border-top:5px solid #111"></div>
<div class="abs" style="left:1511px;top:359.3px;width:396.2px;height:24px;background:#e4e4e4"></div>
<div class="abs" style="left:1894.9px;top:369.0px;width:0;height:0;border-left:3.7px solid transparent;border-right:3.7px solid transparent;border-top:5px solid #111"></div>
<div class="abs" style="left:1511px;top:538.2px;width:396.2px;height:24px;background:#e4e4e4"></div>
<div class="abs" style="left:1894.9px;top:547.9000000000001px;width:0;height:0;border-left:3.7px solid transparent;border-right:3.7px solid transparent;border-top:5px solid #111"></div>
<div class="abs" style="left:1511px;top:594.3px;width:396.2px;height:24px;background:#e4e4e4"></div>
<div class="abs" style="left:1894.9px;top:604.0px;width:0;height:0;border-left:3.7px solid transparent;border-right:3.7px solid transparent;border-top:5px solid #111"></div>
<div class="abs" style="left:1511px;top:619.8px;width:396.2px;height:24px;background:#e4e4e4"></div>
<div class="abs" style="left:1894.9px;top:629.5px;width:0;height:0;border-left:3.7px solid transparent;border-right:3.7px solid transparent;border-top:5px solid #111"></div>
<div class="abs" style="left:1510.5px;top:385.1px;width:396.7px;height:23px;background:#f2f2f2"></div>
<div class="abs" style="left:1510.5px;top:410.6px;width:396.7px;height:23px;background:#f2f2f2"></div>
<div class="abs" style="left:1510.5px;top:436.6px;width:396.7px;height:23px;background:#f2f2f2"></div>
<div class="abs" style="left:1510.5px;top:462.1px;width:396.7px;height:23px;background:#f2f2f2"></div>
<div class="abs" style="left:1510.5px;top:487.6px;width:396.7px;height:23px;background:#f2f2f2"></div>
<div class="abs" style="left:1510.5px;top:513.1px;width:396.7px;height:23px;background:#f2f2f2"></div>
<div class="abs" style="left:1507.2px;top:408px;width:402.4px;height:28.9px;border:4px solid #fb0007;border-radius:8px"></div>
<div class="abs" style="left:1381.5px;top:206.6px;width:0;height:0;border-left:5.1px solid transparent;border-right:5.1px solid transparent;border-top:7.2px solid #f26f21"></div>
<div class="abs" style="left:1381.5px;top:338.9px;width:0;height:0;border-left:5.1px solid transparent;border-right:5.1px solid transparent;border-top:7.2px solid #f26f21"></div>
<div class="abs" style="left:1381.5px;top:574px;width:0;height:0;border-left:5.1px solid transparent;border-right:5.1px solid transparent;border-top:7.2px solid #f26f21"></div>
<div class="t" style="left:1408.0px;top:233.3px;font-size:12px;color:#1c1c1c;font-weight:bold;letter-spacing:-0.68px">Cross-section</div>
<div class="t" style="left:1408.0px;top:258.9px;font-size:12px;color:#1c1c1c;font-weight:bold;letter-spacing:-0.04px">Mirror Y</div>
<div class="t" style="left:1408.0px;top:284.4px;font-size:12px;color:#1c1c1c;font-weight:bold">Mirror Z</div>
<div class="t" style="left:1408.0px;top:309.9px;font-size:12px;color:#1c1c1c;font-weight:bold;letter-spacing:-0.33px">Geometrical type</div>
<div class="t" style="left:1408.0px;top:366.0px;font-size:12px;color:#1c1c1c;font-weight:bold;letter-spacing:-0.13px">Defined by</div>
<div class="t" style="left:1408.0px;top:392.2px;font-size:12px;color:#1c1c1c;font-weight:bold;letter-spacing:-0.21px">β – Direction [°]</div>
<div class="t" style="left:1408.0px;top:417.6px;font-size:12px;color:#1c1c1c;font-weight:bold;letter-spacing:-0.23px">γ - Pitch [°]</div>
<div class="t" style="left:1408.0px;top:443.3px;font-size:12px;color:#1c1c1c;font-weight:bold;letter-spacing:-0.16px">α - Rotation [°]</div>
<div class="t" style="left:1408.0px;top:468.8px;font-size:12px;color:#1c1c1c;font-weight:bold;letter-spacing:-0.35px">Offset ex [mm]</div>
<div class="t" style="left:1408.0px;top:494.4px;font-size:12px;color:#1c1c1c;font-weight:bold;letter-spacing:-0.35px">Offset ey [mm]</div>
<div class="t" style="left:1408.0px;top:519.9px;font-size:12px;color:#1c1c1c;font-weight:bold;letter-spacing:-0.35px">Offset ez [mm]</div>
<div class="t" style="left:1408.0px;top:544.9px;font-size:12px;color:#1c1c1c;font-weight:bold;letter-spacing:-0.34px">Align</div>
<div class="t" style="left:1408.0px;top:600.9px;font-size:12px;color:#1c1c1c;font-weight:bold;letter-spacing:-0.07px">Model type</div>
<div class="t" style="left:1408.0px;top:626.5px;font-size:12px;color:#1c1c1c;font-weight:bold;letter-spacing:-0.60px">Forces in</div>
<div class="t" style="left:1408.3px;top:203.9px;font-size:14px;color:#f26f21;font-weight:bold;letter-spacing:0.03px">Properties</div>
<div class="t" style="left:1408.3px;top:336.6px;font-size:14px;color:#f26f21;font-weight:bold;letter-spacing:-0.15px">Position</div>
<div class="t" style="left:1408.3px;top:571.6px;font-size:14px;color:#f26f21;font-weight:bold;letter-spacing:0.51px">Model</div>
<div class="t" style="left:1517.4px;top:233.0px;font-size:12px;color:#222;letter-spacing:-0.39px">2 - CON1 (IPE220)</div>
<div class="t" style="left:1517.4px;top:309.6px;font-size:12px;color:#222;letter-spacing:-0.40px">Ended</div>
<div class="t" style="left:1517.4px;top:365.7px;font-size:12px;color:#222;letter-spacing:-0.08px">Rotations</div>
<div class="t" style="left:1517.4px;top:544.6px;font-size:12px;color:#222">In node</div>
<div class="t" style="left:1517.4px;top:600.6px;font-size:12px;color:#222;letter-spacing:0.14px">N-Vy-Vz-Mx-My-Mz</div>
<div class="t" style="left:1517.4px;top:626.2px;font-size:12px;color:#222;letter-spacing:0.13px">Node</div>
<div class="t" style="left:1515.2px;top:391.9px;font-size:12px;color:#111;letter-spacing:-0.30px">0,0</div>
<div class="t" style="left:1515.2px;top:417.4px;font-size:12px;color:#111;letter-spacing:-0.30px">3,0</div>
<div class="t" style="left:1515.2px;top:443.0px;font-size:12px;color:#111;letter-spacing:-0.30px">0,0</div>
<div class="t" style="left:1515.2px;top:468.5px;font-size:12px;color:#111;letter-spacing:-0.59px">0</div>
<div class="t" style="left:1515.2px;top:494.1px;font-size:12px;color:#111;letter-spacing:-0.59px">0</div>
<div class="t" style="left:1515.2px;top:519.6px;font-size:12px;color:#111;letter-spacing:-0.59px">0</div>
<div class="t" style="left:1374.0px;top:678.0px;font-size:12px;color:#555;letter-spacing:-0.02px">One member of the joint is considered as 'bearing'. The other</div>
<div class="t" style="left:1374.0px;top:694.0px;font-size:12px;color:#555;letter-spacing:-0.06px">ones are 'connected'. The support in analysis model is applied on</div>
<div class="t" style="left:1374.0px;top:710.0px;font-size:12px;color:#555;letter-spacing:0.07px">the bearing member.</div>
<!--PANEL_END-->
<!--STATUS_START--><!-- status -->
<div class="t" style="left:24.7px;top:1138.7px;font-size:12px;color:#8c8c8c;font-weight:bold;letter-spacing:-0.42px">Design code:</div>
<div class="t" style="left:100.7px;top:1138.7px;font-size:12px;color:#fff;font-weight:bold;letter-spacing:-0.74px">EN</div>
<div class="t" style="left:136.7px;top:1138.7px;font-size:12px;color:#8c8c8c;font-weight:bold;letter-spacing:-0.50px">Analysis:</div>
<div class="t" style="left:190.7px;top:1138.7px;font-size:12px;color:#fff;font-weight:bold;letter-spacing:-0.33px">Stress, strain</div>
<div class="t" style="left:283.2px;top:1138.7px;font-size:12px;color:#8c8c8c;font-weight:bold;letter-spacing:-0.31px">Load effects:</div>
<div class="t" style="left:360.0px;top:1138.7px;font-size:12px;color:#fff;font-weight:bold;letter-spacing:-0.10px">In equilibrium</div>
<div class="t" style="left:457.8px;top:1138.7px;font-size:12px;color:#8c8c8c;font-weight:bold;letter-spacing:-0.32px">Units:</div>
<div class="t" style="left:499.2px;top:1138.7px;font-size:12px;color:#fff;font-weight:bold;letter-spacing:-0.12px">mm</div>
<div class="t" style="left:1796px;top:1138.5px;font-size:12px;color:#fff;letter-spacing:0.12px"><span style="color:#f26f21">www.</span>ideastatica<span style="color:#f26f21">.com</span></div>
<!--STATUS_END-->
</div>
</body>
</html>
